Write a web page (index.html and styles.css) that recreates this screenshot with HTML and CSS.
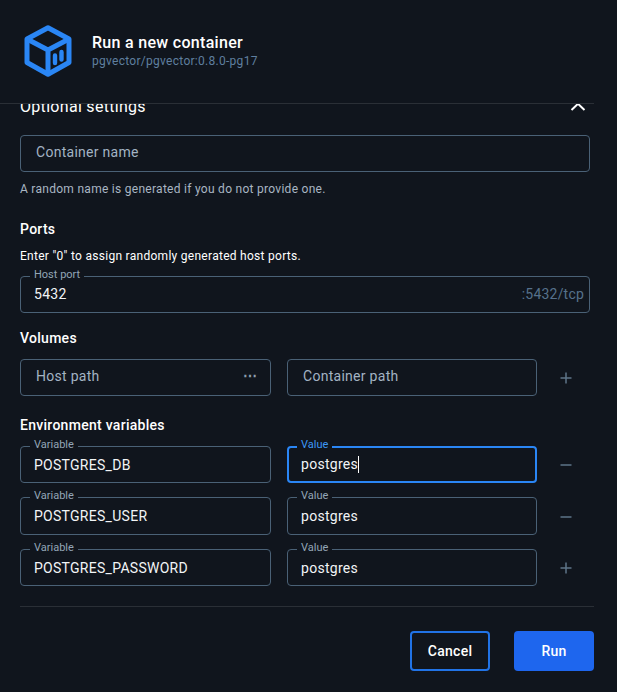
FILE: index.html
```html
<!DOCTYPE html>
<html lang="en">
<head>
<meta charset="utf-8">
<title>Run a new container</title>
<link rel="stylesheet" href="styles.css">
</head>
<body>
<main class="dialog">
  <header class="head">
    <svg class="logo" width="48" height="52" viewBox="0 0 48 52" fill="none">
      <path d="M24 2.8 45 14V37.5L24 49.2 3 37.5V14Z" stroke="#2a86f5" stroke-width="5" stroke-linejoin="round"/>
      <path d="M3 14 24 25 45 14M24 25V49.5" stroke="#2a86f5" stroke-width="5" stroke-linejoin="round"/>
      <path d="M31 30.5V38M37.5 27V34.5" stroke="#2a86f5" stroke-width="4.4" stroke-linecap="round"/>
    </svg>
    <div class="head-text">
      <h1 class="title">Run a new container</h1>
      <p class="subtitle">pgvector/pgvector:0.8.0-pg17</p>
    </div>
  </header>

  <section class="body">
    <div class="acc">
      <h2 class="acc-title">Optional settings</h2>
      <svg class="chev" width="16" height="10" viewBox="0 0 16 10" fill="none"><path d="M1.5 8 8 1.8 14.5 8" stroke="#fff" stroke-width="2"/></svg>
    </div>

    <div class="field field-full"><span class="ph">Container name</span></div>
    <p class="help">A random name is generated if you do not provide one.</p>

    <h3 class="h h-ports">Ports</h3>
    <p class="note">Enter "0" to assign randomly generated host ports.</p>
    <div class="field field-full">
      <span class="lab">Host port</span>
      <span class="val val-port">5432</span>
      <span class="suffix">:5432/tcp</span>
    </div>

    <h3 class="h h-vol">Volumes</h3>
    <div class="row">
      <div class="field"><span class="ph">Host path</span><span class="dots">&#8943;</span></div>
      <div class="field"><span class="ph">Container path</span></div>
      <svg class="act" width="12" height="12" viewBox="0 0 12 12"><path d="M6 .5v11M.5 6h11" stroke="#5d7488" stroke-width="1.5"/></svg>
    </div>

    <h3 class="h h-env">Environment variables</h3>
    <div class="env">
      <div class="row">
        <div class="field"><span class="lab">Variable</span><span class="val">POSTGRES_DB</span></div>
        <div class="field field-focus"><span class="lab">Value</span><span class="val">postgres<i class="caret"></i></span></div>
        <svg class="act" width="12" height="12" viewBox="0 0 12 12"><path d="M.5 6h11" stroke="#5d7488" stroke-width="1.5"/></svg>
      </div>
      <div class="row row-mid">
        <div class="field"><span class="lab">Variable</span><span class="val">POSTGRES_USER</span></div>
        <div class="field"><span class="lab">Value</span><span class="val">postgres</span></div>
        <svg class="act" width="12" height="12" viewBox="0 0 12 12"><path d="M.5 6h11" stroke="#5d7488" stroke-width="1.5"/></svg>
      </div>
      <div class="row">
        <div class="field"><span class="lab">Variable</span><span class="val">POSTGRES_PASSWORD</span></div>
        <div class="field"><span class="lab">Value</span><span class="val">postgres</span></div>
        <svg class="act" width="12" height="12" viewBox="0 0 12 12"><path d="M6 .5v11M.5 6h11" stroke="#5d7488" stroke-width="1.5"/></svg>
      </div>
    </div>
  </section>

  <footer class="foot">
    <button class="btn btn-out" type="button">Cancel</button>
    <button class="btn btn-fill" type="button">Run</button>
  </footer>
</main>
</body>
</html>
```

FILE: styles.css
```css
* { box-sizing: border-box; }
html, body { margin: 0; height: 100%; }
body {
  background: #10151d;
  color: #fff;
  font-family: Roboto, "Liberation Sans", sans-serif;
  letter-spacing: .28px;
  overflow: hidden;
}
.dialog { width: 617px; height: 692px; display: flex; flex-direction: column; }

.head {
  height: 104px;
  margin-right: 23px;
  padding: 25px 0 0 24px;
  display: flex;
  align-items: flex-start;
  gap: 20px;
  border-bottom: 1px solid #2a2f36;
  position: relative;
  z-index: 1;
  background: #10151d;
}
.head-text { padding-top: 8px; }
.title { margin: 0; font-size: 16px; line-height: 19px; font-weight: 500; letter-spacing: .3px; color: #fff; }
.subtitle { margin: 2px 0 0; font-size: 12px; line-height: 14px; color: #5f7f9f; }

.body { flex: 1; padding: 0 27px 0 20px; min-height: 0; overflow: hidden; }
.acc { display: flex; justify-content: space-between; align-items: center; margin: -8px 4px 0 0; height: 21px; }
.acc-title { margin: 0; font-size: 16px; font-weight: 400; letter-spacing: .3px; line-height: 21px; color: #fff; }

.field {
  position: relative;
  flex: 1 1 0;
  height: 37px;
  border: 1px solid #4a6176;
  border-radius: 4px;
  display: flex;
  align-items: center;
  padding: 0 5px 0 13px;
  font-size: 14px;
}
.field-full { width: 570px; flex: none; margin-top: 18px; }
.ph { padding-left: 2px; padding-bottom: 4px; color: #a3b3c3; }
.val { color: #f2f4f6; }
.val-port { padding-bottom: 2px; }
.lab {
  position: absolute;
  left: 9px;
  top: -9px;
  padding: 0 4px;
  background: #10151d;
  font-size: 11px;
  line-height: 13px;
  letter-spacing: 0;
  color: #93a5b6;
}
.suffix { margin-left: auto; padding-bottom: 2px; color: #56718b; letter-spacing: .2px; }
.dots { margin-left: auto; margin-right: 8px; color: #8d9dad; font-size: 14px; font-weight: 700; padding-bottom: 4px; }
.help { margin: 10px 0 0; font-size: 12px; line-height: 14px; color: #a9b6c3; }
.h { margin: 0; font-size: 14px; line-height: 16px; font-weight: 500; color: #fff; }
.h-ports { margin-top: 25px; }
.h-vol { margin-top: 17px; }
.h-env { margin-top: 21px; }
.note { margin: 12px 0 0; font-size: 12px; line-height: 14px; color: #fff; }
.note + .field { margin-top: 13px; }

.row { display: flex; align-items: center; gap: 16px; margin-top: 13px; }
.row .field:first-child { flex: 0 0 251px; }
.row .act { flex: none; margin: 1px 18px 0 7px; }
.env { display: flex; flex-direction: column; gap: 14.25px; }
.h-env + .env { margin-top: 13px; }
.env .row { margin-top: 0; }
.row-mid .field { height: 37.5px; }
.field-focus { border: 2px solid #2a86f5; padding-left: 12px; }
.field-focus .lab { color: #3d97f5; left: 8px; top: -10px; }
.caret { display: inline-block; width: 1px; height: 17px; background: #fff; vertical-align: -4px; }

.foot {
  margin: 0 23px 21px 20px;
  padding-top: 24px;
  border-top: 1px solid #2a2f36;
  display: flex;
  justify-content: flex-end;
  gap: 24px;
}
.btn { width: 80px; height: 40px; border-radius: 4px; font: 500 14px Roboto, "Liberation Sans", sans-serif; color: #fff; letter-spacing: .28px; }
.btn-out { background: transparent; border: 2px solid #2173e6; }
.btn-fill { background: #1e66ee; border: 0; }
```
